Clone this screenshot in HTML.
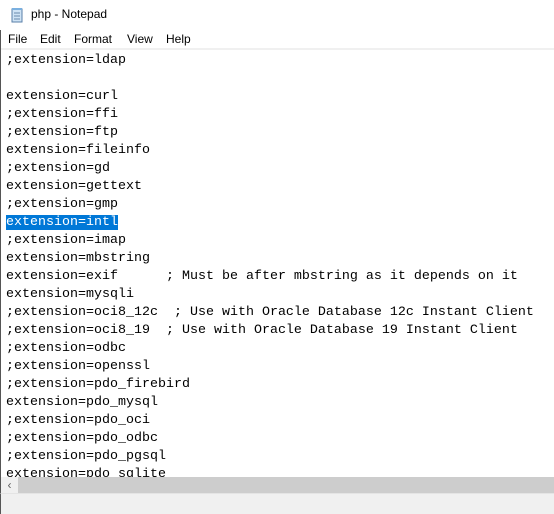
<!DOCTYPE html>
<html><head><meta charset="utf-8"><style>
*{margin:0;padding:0;box-sizing:border-box}
body{width:554px;height:514px;overflow:hidden;background:#fff;position:relative;font-family:"Liberation Sans",sans-serif}
.title{position:absolute;left:0;top:0;width:554px;height:30px;background:#fff}
.title span{position:absolute;left:31px;top:7px;font-size:12px;color:#000}
.menu{position:absolute;left:0;top:30px;width:554px;height:18px;background:#fff;font-size:12px;color:#000;border-left:1px solid #555}
.menu span{position:absolute;top:2px}
.sep{position:absolute;left:0;top:48px;width:554px;height:2px;background:#f0f0f0;border-left:1px solid #555}
.edit{position:absolute;left:0;top:50px;width:554px;height:427px;overflow:hidden;border-left:1px solid #555}
pre{position:absolute;left:5px;top:2px;font-family:"Liberation Mono",monospace;font-size:13.33px;line-height:18px;color:#000}
.sel{background:#0078d7;color:#fff}
.hs{position:absolute;left:0;top:477px;width:554px;height:16px;background:#cdcdcd;border-left:1px solid #555}
.hs .arr{position:absolute;left:0;top:0;width:17px;height:16px;background:#f0f0f0;font-size:12px;color:#606060;text-align:center;line-height:16px}
.status{position:absolute;left:0;top:493px;width:554px;height:21px;background:#f0f0f0;border-top:1px solid #e4e4e4;border-left:1px solid #555}
</style></head><body>
<div class="title">
<svg style="position:absolute;left:9px;top:7px" width="16" height="16" viewBox="0 0 16 16"><rect x="3" y="2" width="10" height="13" fill="#cfe3f5" stroke="#5a7fa8"/><rect x="3" y="1" width="10" height="2" fill="#7ab0e0"/><line x1="5" y1="6" x2="11" y2="6" stroke="#6a8aaa"/><line x1="5" y1="9" x2="11" y2="9" stroke="#6a8aaa"/><line x1="5" y1="12" x2="11" y2="12" stroke="#6a8aaa"/></svg>
<span>php - Notepad</span></div>
<div class="menu"><span style="left:7px">File</span><span style="left:39px">Edit</span><span style="left:73px">Format</span><span style="left:126px">View</span><span style="left:165px">Help</span></div>
<div class="sep"></div>
<div class="edit"><pre>;extension=ldap

extension=curl
;extension=ffi
;extension=ftp
extension=fileinfo
;extension=gd
extension=gettext
;extension=gmp
<span class="sel">extension=intl</span>
;extension=imap
extension=mbstring
extension=exif      ; Must be after mbstring as it depends on it
extension=mysqli
;extension=oci8_12c  ; Use with Oracle Database 12c Instant Client
;extension=oci8_19  ; Use with Oracle Database 19 Instant Client
;extension=odbc
;extension=openssl
;extension=pdo_firebird
extension=pdo_mysql
;extension=pdo_oci
;extension=pdo_odbc
;extension=pdo_pgsql
extension=pdo_sqlite</pre></div>
<div class="hs"><div class="arr">&lsaquo;</div></div>
<div class="status"></div>
</body></html>
